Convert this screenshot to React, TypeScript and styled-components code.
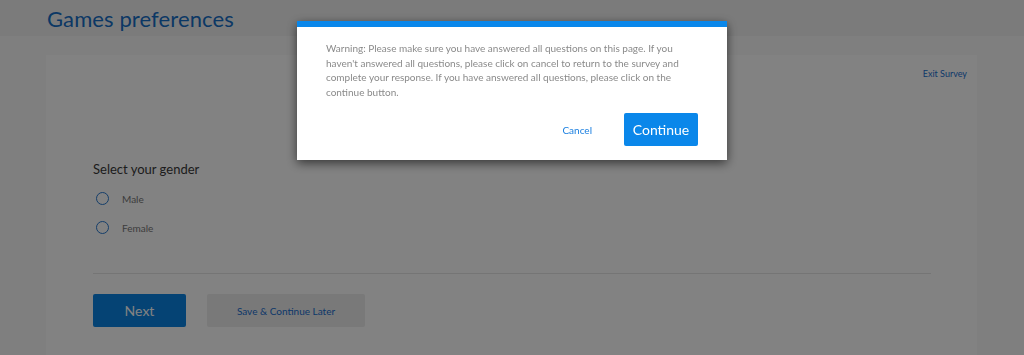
import React from "react";
import styled, { createGlobalStyle } from "styled-components";

const GlobalStyle = createGlobalStyle`
  html, body {
    margin: 0;
    padding: 0;
    background: #fafafa;
    font-family: "Lato", "Open Sans", sans-serif;
  }
`;

const options = ["Male", "Female"];

export default function App() {
  return (
    <>
      <GlobalStyle />
      <Page>
        <Header>
          <Title>Games preferences</Title>
        </Header>
        <Main>
          <Card>
            <TopRow>
              <ExitLink>Exit Survey</ExitLink>
            </TopRow>
            <Question>Select your gender</Question>
            <Options>
              {options.map((o) => (
                <Option key={o}>
                  <Radio />
                  <OptionLabel>{o}</OptionLabel>
                </Option>
              ))}
            </Options>
            <Divider />
            <Actions>
              <NextButton>Next</NextButton>
              <SaveButton>Save &amp; Continue Later</SaveButton>
            </Actions>
          </Card>
        </Main>
      </Page>
      <Overlay>
        <Modal>
          <ModalBody>
            Warning: Please make sure you have answered all questions on this
            page. If you haven't answered all questions, please click on cancel
            to return to the survey and complete your response. If you have
            answered all questions, please click on the continue button.
          </ModalBody>
          <ModalFooter>
            <CancelLink>Cancel</CancelLink>
            <ContinueButton>Continue</ContinueButton>
          </ModalFooter>
        </Modal>
      </Overlay>
    </>
  );
}

const Page = styled.div`
  min-height: 355px;
`;

const Header = styled.header`
  height: 36px;
  background: #f2f2f2;
  padding-left: 47px;
  display: flex;
  align-items: center;
`;

const Title = styled.h1`
  margin: 0;
  font-size: 22px;
  font-weight: 400;
  color: #166ec6;
  letter-spacing: 0.1px;
`;

const Main = styled.main`
  padding: 19px 47px 0 46px;
`;

const Card = styled.section`
  background: #ffffff;
  padding: 13px 10px 30px 47px;
  height: 300px;
  box-sizing: border-box;
`;

const TopRow = styled.div`
  display: flex;
  justify-content: flex-end;
  height: 93px;
`;

const ExitLink = styled.a`
  font-size: 9px;
  color: #1a6fd0;
`;

const Question = styled.div`
  font-size: 13px;
  color: #3a3a3a;
`;

const Options = styled.div`
  display: flex;
  flex-direction: column;
  gap: 16px;
  margin-top: 15px;
  padding-left: 3px;
`;

const Option = styled.label`
  display: flex;
  align-items: center;
  gap: 13px;
`;

const Radio = styled.span`
  width: 11px;
  height: 11px;
  border: 1px solid #2a7ad0;
  border-radius: 50%;
`;

const OptionLabel = styled.span`
  font-size: 10px;
  color: #777;
`;

const Divider = styled.hr`
  border: none;
  border-top: 1px solid #e6e6e6;
  margin: 39px 36px 0 0;
`;

const Actions = styled.div`
  display: flex;
  gap: 21px;
  margin-top: 20px;
`;

const NextButton = styled.button`
  width: 93px;
  height: 33px;
  border: none;
  border-radius: 2px;
  background: #0a84e4;
  color: #fff;
  font-family: inherit;
  font-size: 14px;
`;

const SaveButton = styled.button`
  width: 158px;
  height: 33px;
  border: none;
  border-radius: 2px;
  background: #ededed;
  color: #1a6fd0;
  font-family: inherit;
  font-size: 10px;
`;

const Overlay = styled.div`
  position: fixed;
  inset: 0;
  background: rgba(0, 0, 0, 0.49);
  display: flex;
  justify-content: center;
  align-items: flex-start;
`;

const Modal = styled.div`
  margin-top: 21px;
  width: 430px;
  background: #fff;
  border-top: 6px solid #0a87ea;
  box-shadow: 0 3px 10px rgba(0, 0, 0, 0.6);
  padding: 14px 29px 14px 29px;
  box-sizing: border-box;
`;

const ModalBody = styled.p`
  margin: 0;
  font-size: 10px;
  line-height: 14.6px;
  color: #8a8a8a;
`;

const ModalFooter = styled.div`
  display: flex;
  justify-content: flex-end;
  align-items: center;
  gap: 32px;
  margin-top: 14px;
`;

const CancelLink = styled.a`
  font-size: 10px;
  color: #1a7fe0;
`;

const ContinueButton = styled.button`
  width: 74px;
  height: 33px;
  border: none;
  border-radius: 2px;
  background: #0a87ea;
  color: #fff;
  font-family: inherit;
  font-size: 14px;
`;
